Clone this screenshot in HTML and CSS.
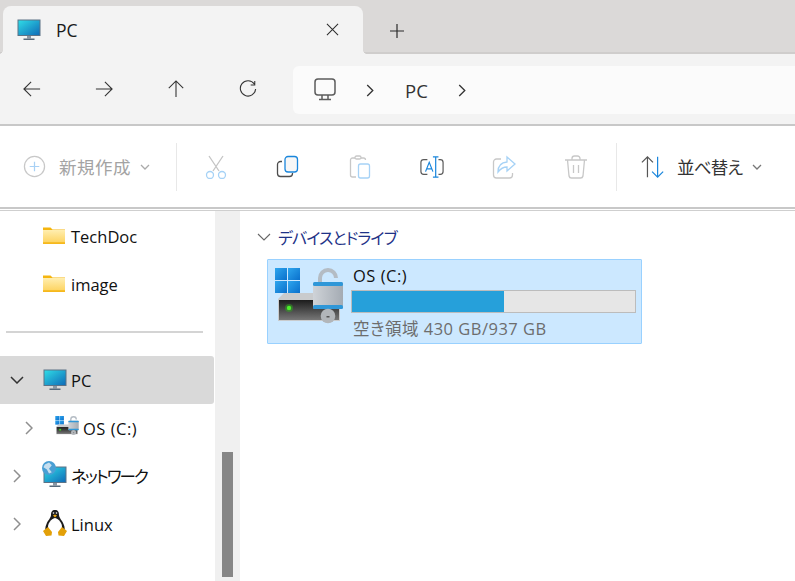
FILE: index.html
```html
<!DOCTYPE html>
<html lang="ja">
<head>
<meta charset="utf-8">
<title>PC</title>
<link rel="stylesheet" href="styles.css">
</head>
<body>
<svg class="defs" width="0" height="0">
  <defs>
    <linearGradient id="screen" x1="0" y1="0" x2="1" y2="1">
      <stop offset="0" stop-color="#2fdbe6"/><stop offset="1" stop-color="#0f6cb8"/>
    </linearGradient>
    <linearGradient id="folder" x1="0" y1="0" x2="0" y2="1">
      <stop offset="0" stop-color="#ffeeb0"/><stop offset="1" stop-color="#fdd462"/>
    </linearGradient>
    <linearGradient id="win" x1="0" y1="0" x2="1" y2="1">
      <stop offset="0" stop-color="#2ea6ee"/><stop offset="1" stop-color="#0a70cc"/>
    </linearGradient>
    <linearGradient id="lockb" x1="0" y1="0" x2="1" y2="0">
      <stop offset="0" stop-color="#cfd3d8"/><stop offset="1" stop-color="#a4abb3"/>
    </linearGradient>
    <linearGradient id="hdd" x1="0" y1="0" x2="0" y2="1">
      <stop offset="0" stop-color="#1c1c1c"/><stop offset="1" stop-color="#777"/>
    </linearGradient>
    <symbol id="pc" viewBox="0 0 24 22">
      <rect x="0.5" y="0.5" width="23" height="16.5" fill="#5c7286"/>
      <rect x="1.5" y="1.5" width="21" height="14.5" fill="url(#screen)"/>
      <rect x="10" y="17" width="4" height="2.5" fill="#8a98a5"/>
      <rect x="6.5" y="19.5" width="11" height="1.5" fill="#56697a"/>
    </symbol>
    <symbol id="fold" viewBox="0 0 22 18">
      <path d="M0 1.5h7.5l2 2H22V18H0z" fill="#f5b50e"/>
      <rect x="0" y="4" width="22" height="12.5" fill="url(#folder)"/>
      <rect x="0" y="16.5" width="22" height="1.5" fill="#f6b81c"/>
    </symbol>
    <symbol id="drive" viewBox="0 0 68 58">
      <rect x="0" y="0" width="12" height="12" fill="url(#win)"/>
      <rect x="13" y="0" width="12" height="12" fill="url(#win)"/>
      <rect x="0" y="13" width="12" height="12" fill="url(#win)"/>
      <rect x="13" y="13" width="12" height="12" fill="url(#win)"/>
      <path d="M9 25 3 31v22h62V25z" fill="#c9cbcd"/>
      <path d="M4 32h60v20H4z" fill="url(#hdd)"/>
      <circle cx="14" cy="40" r="4" fill="#2fb41c" opacity=".45"/>
      <circle cx="14" cy="40" r="2.200" fill="#4cf02a"/>
      <path d="M45 15v-5a8 8 0 0 1 16 0" fill="none" stroke="#b4bcc4" stroke-width="4"/>
      <rect x="38" y="14" width="30" height="27" rx="2" fill="url(#lockb)"/>
      <rect x="38" y="14" width="30" height="4" rx="1.500" fill="#2f97d8"/>
      <rect x="38" y="37" width="30" height="4" rx="1.500" fill="#2f97d8"/>
      <circle cx="53" cy="48" r="7.300" fill="#b2b6ba"/>
      <rect x="51.500" y="48" width="3" height="1.500" fill="#555"/>
    </symbol>
    <symbol id="globe" viewBox="0 0 10 10">
      <circle cx="5" cy="5" r="5" fill="#4a9fd4"/>
      <path d="M2 2.500 5 1l2 2-2 2.500L7 8 5 9 3.500 6 1 4.500z" fill="#c7dfef"/>
    </symbol>
    <symbol id="tux" viewBox="0 0 24 26">
      <path d="M12 0C9 0 8 2 8 5 8 8 5 10 3.500 14 2 17 2 20 3 22h18c1-2 1-5-.5-8C19 10 16 8 16 5c0-3-1-5-4-5z" fill="#1b1b1b"/>
      <path d="M12 8C8 9 5 13 5 17c0 3 3 6 7 6s7-3 7-6c0-4-3-8-7-9z" fill="#fff"/>
      <path d="M10 5.500 12 4.500l2 1L12 7.500z" fill="#e9a610"/>
      <circle cx="10.500" cy="3" r=".8" fill="#fff"/><circle cx="13.500" cy="3" r=".8" fill="#fff"/>
      <path d="M0 21l5-4 4 5-.5 3.500L3 26zM24 21l-5-4-4 5 .5 3.500L21 26z" fill="#e3a008"/>
    </symbol>
  </defs>
</svg>

<header class="tabstrip">
  <div class="tab">
    <svg class="tab-icon"><use href="#pc"/></svg>
    <span class="tab-title">PC</span>
    <svg class="tab-close" viewBox="0 0 14 14"><path d="M1 1l12 12M13 1 1 13"/></svg>
  </div>
  <svg class="tab-add" viewBox="0 0 14 14"><path d="M7 0v14M0 7h14"/></svg>
</header>

<nav class="navbar">
  <div class="nav-buttons">
    <svg class="nav-icon" viewBox="0 0 20 20"><path d="M1 10h18M9 2l-8 8 8 8"/></svg>
    <svg class="nav-icon" viewBox="0 0 20 20"><path d="M1 10h18M11 2l8 8-8 8"/></svg>
    <svg class="nav-icon" viewBox="0 0 20 20"><path d="M10 19V1M2 9l8-8 8 8"/></svg>
    <svg class="nav-icon" viewBox="0 0 20 20"><path d="M17 4.500A8.500 8.500 0 1 0 18.500 10M17.500 1v4.500H13"/></svg>
  </div>
  <div class="address">
    <svg class="addr-pc" viewBox="0 0 22 24"><rect x="1" y="1" width="20" height="16" rx="3"/><path d="M8 17v4M14 17v4M5 21.500h12"/></svg>
    <svg class="chev chev-first" viewBox="0 0 8 14"><path d="M1 1l6 6-6 6"/></svg>
    <span class="addr-text">PC</span>
    <svg class="chev" viewBox="0 0 8 14"><path d="M1 1l6 6-6 6"/></svg>
  </div>
</nav>

<section class="toolbar">
  <div class="tool-new">
    <svg class="ic22" viewBox="0 0 24 24"><circle cx="12" cy="12" r="10.500" stroke="#c8c8c8"/><path d="M12 7v10M7 12h10" stroke="#a8d1f5"/></svg>
    <span class="tool-label disabled">新規作成</span>
    <svg class="caret" viewBox="0 0 10 6"><path d="M1 1l4 4 4-4" stroke="#aaa"/></svg>
  </div>
  <div class="sep"></div>
  <div class="tool-icons">
    <svg class="ic24" viewBox="0 0 24 24"><path d="M5 1l10 15M19 1 9 16" stroke="#c4c4c4"/><circle cx="6" cy="20" r="3.500" stroke="#a6d2f6"/><circle cx="18" cy="20" r="3.500" stroke="#a6d2f6"/></svg>
    <svg class="ic24" viewBox="0 0 24 24"><path d="M6 6.500H4.500A3 3 0 0 0 1.500 9.500v9a3 3 0 0 0 3 3h9a3 3 0 0 0 3-3V18" stroke="#4d4d4d"/><rect x="9" y="1.500" width="12.500" height="15.500" rx="3" stroke="#1a86dc" fill="#f7f7f7"/></svg>
    <svg class="ic24" viewBox="0 0 24 24"><path d="M7 3H4.500a2 2 0 0 0-2 2v15a2 2 0 0 0 2 2H8M17.500 5V5a2 2 0 0 0-2-2H13" stroke="#c8c8c8"/><rect x="7" y="1" width="6" height="3" rx="1.500" stroke="#c8c8c8"/><rect x="10.500" y="9" width="11" height="14" rx="2" stroke="#a6d2f6"/></svg>
    <svg class="ic24" viewBox="0 0 26 24"><path d="M8 4H4a3 3 0 0 0-3 3v10a3 3 0 0 0 3 3h4M20 4h2a3 3 0 0 1 3 3v10a3 3 0 0 1-3 3h-2" stroke="#5a5a5a"/><path d="M17 1v22M14 1h6M14 23h6" stroke="#1a86dc"/><path d="M6 17l4-10 4 10M7.500 14h5" stroke="#1a86dc"/></svg>
    <svg class="ic24" viewBox="0 0 24 24"><path d="M9 4H4.500a3 3 0 0 0-3 3v13a3 3 0 0 0 3 3h13a3 3 0 0 0 3-3v-2" stroke="#c8c8c8"/><path d="M15 2l8 7-8 7v-4c-4 0-6 1-9 5 0-6 3-9.500 9-10z" stroke="#a6d2f6"/></svg>
    <svg class="ic24" viewBox="0 0 24 24"><path d="M1 5h22M8 5V3.500A2.500 2.500 0 0 1 10.500 1h3A2.500 2.500 0 0 1 16 3.500V5M3.500 5l1.500 16a2.500 2.500 0 0 0 2.500 2h9a2.500 2.500 0 0 0 2.500-2l1.500-16M9.500 10v8M14.500 10v8" stroke="#c8c8c8"/></svg>
  </div>
  <div class="sep"></div>
  <div class="tool-sort">
    <svg class="ic24" viewBox="0 0 26 24"><path d="M7 23V1M1 7l6-6 6 6" stroke="#555"/><path d="M18 1v22M12 17l6 6 6-6" stroke="#1a86dc"/></svg>
    <span class="tool-label sort-label">並べ替え</span>
    <svg class="caret" viewBox="0 0 10 6"><path d="M1 1l4 4 4-4" stroke="#777"/></svg>
  </div>
</section>

<div class="rule-gap"></div>

<div class="content">
  <aside class="sidebar">
    <div class="row">
      <svg class="row-fold"><use href="#fold"/></svg>
      <span class="row-label">TechDoc</span>
    </div>
    <div class="row">
      <svg class="row-fold"><use href="#fold"/></svg>
      <span class="row-label">image</span>
    </div>
    <div class="divider"></div>
    <div class="row row-selected">
      <svg class="tree-open" viewBox="0 0 14 8"><path d="M1 1l6 6 6-6"/></svg>
      <svg class="row-pc"><use href="#pc"/></svg>
      <span class="row-label">PC</span>
    </div>
    <div class="row row-child">
      <svg class="tree-closed" viewBox="0 0 8 14"><path d="M1 1l6 6-6 6"/></svg>
      <svg class="row-drive"><use href="#drive"/></svg>
      <span class="row-label row-label-os">OS (C:)</span>
    </div>
    <div class="row row-top">
      <svg class="tree-closed" viewBox="0 0 8 14"><path d="M1 1l6 6-6 6"/></svg>
      <span class="net-icon">
        <svg class="row-pc"><use href="#pc"/></svg>
        <svg class="net-globe"><use href="#globe"/></svg>
      </span>
      <span class="row-label kana-nav">ネットワーク</span>
    </div>
    <div class="row row-top">
      <svg class="tree-closed" viewBox="0 0 8 14"><path d="M1 1l6 6-6 6"/></svg>
      <svg class="row-tux"><use href="#tux"/></svg>
      <span class="row-label">Linux</span>
    </div>
  </aside>
  <div class="scrollbar"><div class="thumb"></div></div>
  <main class="main">
    <div class="group-head">
      <svg class="group-caret" viewBox="0 0 14 8"><path d="M1 1l6 6 6-6"/></svg>
      <span class="group-title">デバイスとドライブ</span>
    </div>
    <div class="tile">
      <svg class="tile-icon"><use href="#drive"/></svg>
      <div class="tile-body">
        <div class="tile-name">OS (C:)</div>
        <div class="bar"><div class="bar-fill" style="width:53.800%"></div></div>
        <div class="tile-free">空き領域 430 GB/937 GB</div>
      </div>
    </div>
  </main>
</div>
</body>
</html>
```
FILE: styles.css
```css
* { box-sizing: border-box; }
html, body { margin: 0; height: 100%; }
body {
  width: 795px; height: 581px; overflow: hidden; background: #fff;
  font-family: "Open Sans", "Noto Sans CJK JP", sans-serif;
  color: #1a1a1a;
  display: flex; flex-direction: column;
  font-feature-settings: "palt";
}
.defs { position: absolute; }
svg { display: block; flex: none; fill: none; }

.tabstrip {
  height: 54px; background: #dbd9d8; border-bottom: 2px solid #cfcdcc;
  display: flex; align-items: flex-start; padding: 6px 0 0 3px; flex: none;
}
.tab {
  position: relative;
  width: 360px; height: 48px; background: #f3f3f3; border-radius: 8px 8px 0 0;
  display: flex; align-items: center; padding: 0 0 0 14px;
}
.tab::before, .tab::after {
  content: ""; position: absolute; bottom: 0; width: 5px; height: 5px;
}
.tab::before { left: -5px; background: radial-gradient(circle at 0 0, transparent 5px, #f3f3f3 5.500px); }
.tab::after { right: -5px; background: radial-gradient(circle at 100% 0, transparent 5px, #f3f3f3 5.500px); }
.tab-icon { width: 24px; height: 22px; margin-top: -1px; }
.tab-title { margin-left: 15px; font-size: 17.500px; font-weight: 500; flex: 1; margin-top: -1px; }
.tab-close { width: 13px; height: 13px; margin-right: 24px; margin-top: -1px; stroke: #2b2b2b; stroke-width: 1.100; }
.tab-add { width: 14px; height: 14px; margin: 18px 0 0 27px; stroke: #2b2b2b; stroke-width: 1.200; }

.navbar {
  height: 70px; background: #f3f3f3; flex: none;
  display: flex; align-items: flex-start; padding-top: 12px;
}
.nav-buttons {
  width: 293px; height: 46px; display: flex; align-items: center;
  gap: 54px; padding: 0 0 0 23px;
}
.nav-icon { width: 18px; height: 18px; stroke: #333; stroke-width: 1.200; }
.address {
  flex: 1; height: 48px; background: #fbfbfb; border-radius: 6px 0 0 6px;
  display: flex; align-items: center; padding-left: 21px;
}
.addr-pc { width: 22px; height: 24px; stroke: #5c5c5c; stroke-width: 1.500; margin-top: -1px; }
.chev { width: 8px; height: 13px; stroke: #333; stroke-width: 1.400; margin-top: 1px; }
.chev-first { margin-left: 30px; }
.addr-text { font-size: 18.500px; margin: 0 30px 0 31px; color: #333; }

.toolbar {
  height: 85px; flex: none; background: #fff;
  border-top: 2px solid #c8c8c8;
  border-bottom: 2px solid #c8c8c8;
  display: flex; align-items: center; padding-left: 23px;
}
.tool-new { display: flex; align-items: center; width: 153px; }
.tool-label { font-size: 17.500px; margin-left: 13px; color: #333; }
.tool-label.disabled { color: #a3a3a3; letter-spacing: 0.500px; }
.sort-label { letter-spacing: -0.800px; margin-left: 12px; }
.ic22 { width: 23px; height: 23px; }
.caret { width: 10px; height: 6px; margin-left: 9px; }
.toolbar svg path, .toolbar svg circle, .toolbar svg rect { stroke-width: 1.300; }
.sep { width: 1px; height: 48px; background: #e8e8e8; }
.tool-icons {
  display: flex; align-items: center; gap: 48px; width: 439px; padding-left: 27px;
}
.ic24 { width: 24px; height: 24px; }
.tool-sort { display: flex; align-items: center; padding-left: 24px; }

.rule-gap { height: 2px; flex: none; border-bottom: 1px solid #cfcfcf; }

.content { flex: 1; display: flex; min-height: 0; }
.sidebar { width: 215px; flex: none; display: flex; flex-direction: column; padding-top: 1px; }
.row { height: 48px; flex: none; display: flex; align-items: center; padding-left: 43px; }
.row-label { font-size: 16.500px; color: #111; margin-left: 6px; }
.row-fold { width: 22px; height: 18px; margin-top: -2px; }
.divider { height: 2px; background: #d4d4d4; margin: 23px 12px 23px 6px; flex: none; }
.row-selected { background: #d9d9d9; width: 214px; border-radius: 0 3px 3px 0; padding-left: 10px; }
.tree-open { width: 14px; height: 8px; stroke: #333; stroke-width: 1.500; margin-right: 19px; }
.row-pc { width: 24px; height: 22px; }
.row-selected .row-label { margin-left: 4px; }
.row-child { padding-left: 25px; }
.tree-closed { width: 8px; height: 14px; stroke: #8f8f8f; stroke-width: 1.500; }
.row-drive { width: 24px; height: 20px; margin-left: 22px; margin-top: -5px; }
.row-label-os { margin-left: 4px; letter-spacing: 0.500px; }
.row-top { padding-left: 13px; }
.row-top .row-label { margin-left: 4px; }
.row-top .row-pc { margin-top: 2px; }
.net-icon { position: relative; width: 24px; height: 24px; margin-left: 22px; display: block; }
.net-globe { position: absolute; left: -1px; top: -3px; width: 14px; height: 14px; }
.row-top .kana-nav { letter-spacing: -1.900px; }
.row-tux { width: 24px; height: 26px; margin-left: 22px; margin-top: -2px; }

.scrollbar { width: 25px; flex: none; background: #f0f0f0; padding: 241px 7px 0; }
.thumb { width: 11px; height: 125px; background: #868686; }

.main { flex: 1; padding: 14px 0 0 14px; border-left: 3px solid #fff; }
.group-head { display: flex; align-items: center; height: 24px; }
.group-caret { width: 14px; height: 8px; stroke: #666; stroke-width: 1.100; }
.group-title { margin-left: 7px; font-size: 16px; letter-spacing: -0.900px; color: #1e3287; }
.tile {
  margin: 10px 0 0 10px; width: 375px; height: 85px;
  background: #cce8ff; border: 1px solid #99d1ff; border-radius: 1px;
  display: flex;
}
.tile-icon { width: 68px; height: 58px; margin: 8px 0 0 7px; }
.tile-body { margin-left: 8px; width: 285px; padding-top: 4px; }
.tile-name { font-size: 16.500px; letter-spacing: 0.500px; height: 26px; padding-left: 2px; color: #111; }
.bar { height: 23px; background: #e6e6e6; border: 1px solid #bcbcbc; }
.bar-fill { height: 100%; background: #26a0da; }
.tile-free { font-size: 16.500px; letter-spacing: 0.500px; color: #6d6d6d; padding-left: 2px; margin-top: 3px; }
```
